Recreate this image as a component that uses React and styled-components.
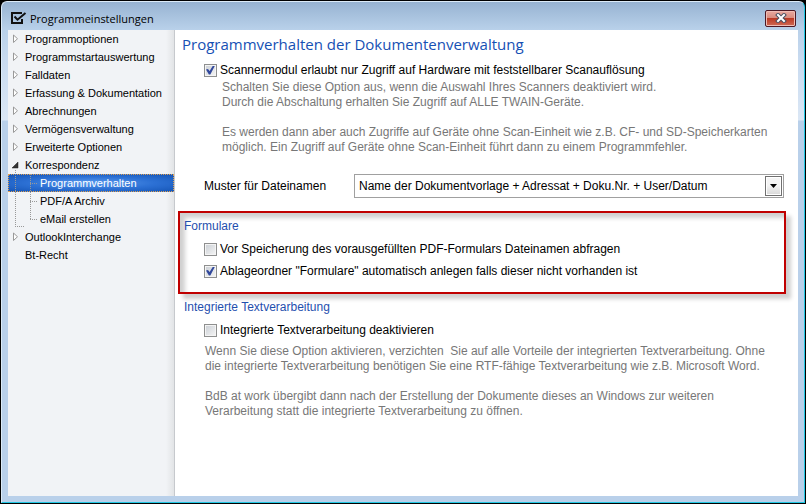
import { useState } from "react";
import styled, { createGlobalStyle, css } from "styled-components";

const GlobalStyle = createGlobalStyle`
  * {
    box-sizing: border-box;
  }
  body {
    margin: 0;
    background-color: #000;
    font-family: "Liberation Sans", Arial, sans-serif;
    font-size: 12px;
    color: #000;
  }
`;

const Window = styled.div`
  display: flex;
  flex-direction: column;
  min-height: calc(100vh - 2px);
  margin: 1px;
  padding: 0 6px 6px;
  border: 1px solid #dcebf8;
  border-right-color: #22c8e4;
  border-bottom-color: #22c8e4;
  border-radius: 6px 6px 0 0;
  background: linear-gradient(#97b3d2 0, #b9d1ea 28px, #c9dbf0 60px, #dbe7f5 118px, #b9d0ea 119px);
`;
const TitleBar = styled.header`
  display: flex;
  align-items: center;
  height: 28px;
  padding: 4px 2px 0;
`;
const Title = styled.h1`
  flex: 1;
  margin: 0 0 0 3px;
  font-family: "Open Sans", "Noto Sans", sans-serif;
  font-size: 11px;
  font-weight: 400;
`;
const CloseButton = styled.button`
  display: flex;
  align-items: center;
  justify-content: center;
  width: 31px;
  height: 17px;
  padding: 0;
  border: 1px solid #4c1824;
  border-radius: 2px;
  background: linear-gradient(#e9a99f, #d98c80 45%, #bb3a25 50%, #cf6a55);
  box-shadow: inset 0 0 0 1px #efbcb4;
`;
const Body = styled.div`
  flex: 1;
  display: flex;
`;

const Sidebar = styled.nav`
  width: 167px;
  flex-shrink: 0;
  border-right: 1px solid #c6c9cd;
  background: linear-gradient(to left, #e2e4e6, #f1f3f6 8px);
  font-size: 11px;
`;
const Tree = styled.ul`
  margin: 0;
  padding: 0;
  list-style: none;
`;
const SubTree = styled(Tree)`
  position: relative;

  &::before {
    content: "";
    position: absolute;
    z-index: 1;
    left: 7px;
    top: -4px;
    bottom: 1px;
    width: 8px;
    border-left: 1px dotted #999;
    border-bottom: 1px dotted #999;
  }
  &::after {
    content: "";
    position: absolute;
    left: 22px;
    top: 0;
    bottom: 9px;
    border-left: 1px dotted #999;
  }
`;
const Branch = styled.span`
  width: 7px;
  margin-right: 3px;
  border-top: 1px dotted #999;
`;
const TreeLink = styled.a`
  display: flex;
  align-items: center;
  height: 18px;
  padding-left: ${({ $nested }) => ($nested ? "22px" : "3px")};
  color: inherit;
  text-decoration: none;
  white-space: nowrap;

  ${({ $active }) =>
    $active &&
    css`
      padding-left: 21px;
      border: 1px dotted #e0a050;
      background: radial-gradient(ellipse at center, #5a9cf0, #2c70d4 55%, #1757b8);
      color: #fff;
    `}
`;
const Marker = styled.svg`
  width: 9px;
  height: 10px;
  margin-right: 5px;
`;

const Content = styled.main`
  flex: 1;
  min-width: 0;
  padding: 4px 12px 16px 3px;
  background-color: #fff;
`;
const Heading = styled.h2`
  margin: 0 0 9px 4px;
  font-family: "Open Sans", "Noto Sans", sans-serif;
  font-size: 15px;
  font-weight: 400;
  line-height: 20px;
  color: #1650b4;
`;
const CheckLabel = styled.label`
  display: flex;
  align-items: center;
  gap: 3px;
  height: 14px;
`;
const CheckBox = styled.input`
  appearance: none;
  display: grid;
  place-items: center;
  width: 13px;
  height: 13px;
  margin: 0;
  border: 1px solid #8e8f8f;
  background: linear-gradient(135deg, #c9ced4, #f6f6f6);
  box-shadow: inset 0 0 0 1px #f4f4f4;

  &:checked::before {
    content: "";
    width: 9px;
    height: 9px;
    background-color: #31489c;
    clip-path: polygon(0 45%, 22% 38%, 40% 62%, 78% 0, 100% 0, 48% 100%, 32% 100%);
  }
`;
const Indented = styled.div`
  padding-left: 26px;
`;
const Hint = styled.p`
  margin: 0;
  padding-left: ${({ $deep }) => ($deep ? "18px" : "1px")};
  line-height: 15px;
  color: #777;
  white-space: pre-line;
`;
const HintGroup = styled.div`
  display: grid;
  gap: 15px;
  margin-top: ${({ $top }) => $top}px;
`;
const PatternRow = styled.div`
  display: flex;
  align-items: center;
  margin-top: 19px;
  padding-right: 2px;
`;
const PatternLabel = styled.label`
  width: 150px;
  flex-shrink: 0;
`;
const SelectBox = styled.div`
  position: relative;
  flex: 1;
`;
const Select = styled.select`
  appearance: none;
  display: block;
  width: 100%;
  height: 24px;
  padding: 0 24px 0 4px;
  border: 1px solid #a0a0a0;
  border-radius: 0;
  background-color: #fff;
  color: #000;
  font: inherit;
`;
const SelectArrow = styled.span`
  position: absolute;
  top: 2px;
  right: 2px;
  display: flex;
  align-items: center;
  justify-content: center;
  width: 17px;
  height: 20px;
  border: 1px solid #707070;
  background: linear-gradient(#f4f4f4 45%, #d8d8d8);
  box-shadow: inset 0 0 0 1px #fff;
  pointer-events: none;
`;
const Group = styled.fieldset`
  display: grid;
  gap: 8px;
  min-width: 0;
  margin: 0;
  padding: 0;
  border: 0;
`;
const HighlightedGroup = styled(Group)`
  margin-top: 13px;
  padding: 6px 4px 14px;
  border: 2px solid #c00000;
  box-shadow: 5px 5px 4px #d0d0d0, inset 5px 5px 4px #d0d0d0;
`;
const PlainGroup = styled(Group)`
  margin-top: 6px;
  padding: 0 6px;
`;
const Legend = styled.legend`
  float: left;
  width: 100%;
  padding: 0;
  line-height: 15px;
  color: #1f4fae;
`;
const Options = styled.div`
  display: grid;
  gap: ${({ $gap }) => $gap || 8}px;
  padding-left: 20px;
`;

const treeItems = [
  { label: "Programmoptionen", expandable: true },
  { label: "Programmstartauswertung", expandable: true },
  { label: "Falldaten", expandable: true },
  { label: "Erfassung & Dokumentation", expandable: true },
  { label: "Abrechnungen", expandable: true },
  { label: "Vermögensverwaltung", expandable: true },
  { label: "Erweiterte Optionen", expandable: true },
  {
    label: "Korrespondenz",
    expandable: true,
    children: ["Programmverhalten", "PDF/A Archiv", "eMail erstellen"],
  },
  { label: "OutlookInterchange", expandable: true },
  { label: "Bt-Recht", expandable: false },
];

const TreeMarker = ({ expandable, open }) => (
  <Marker viewBox="0 0 9 10" aria-hidden="true">
    {expandable && !open && (
      <path d="M2.5 1v7.5l4-3.75z" fill="#fff" stroke="#999" />
    )}
    {open && <path d="M7 2v6H1z" fill="#333" stroke="#222" strokeWidth="0.5" />}
  </Marker>
);

const AppIcon = () => (
  <svg width="17" height="14" viewBox="0 0 17 14" aria-hidden="true">
    <path d="M12 2H2v10h10V8" fill="none" stroke="#111" strokeWidth="2" />
    <path d="M4.5 5.5l3 3.2L15.5 2" fill="none" stroke="#111" strokeWidth="2" />
  </svg>
);

const Check = ({ label, defaultChecked }) => {
  const [checked, setChecked] = useState(Boolean(defaultChecked));
  return (
    <CheckLabel>
      <CheckBox
        type="checkbox"
        checked={checked}
        onChange={(e) => setChecked(e.target.checked)}
      />
      {label}
    </CheckLabel>
  );
};

const App = () => {
  const [active, setActive] = useState("Programmverhalten");

  return (
    <>
      <GlobalStyle />
      <Window>
        <TitleBar>
          <AppIcon />
          <Title>Programmeinstellungen</Title>
          <CloseButton type="button" aria-label="Schließen">
            <svg width="12" height="10" viewBox="0 0 12 10">
              <path d="M3 2l6 6M9 2L3 8" stroke="#4a4f60" strokeWidth="4" strokeLinecap="square" />
              <path d="M3 2l6 6M9 2L3 8" stroke="#fff" strokeWidth="2" strokeLinecap="square" />
            </svg>
          </CloseButton>
        </TitleBar>
        <Body>
          <Sidebar>
            <Tree>
              {treeItems.map(({ label, expandable, children }) => (
                <li key={label}>
                  <TreeLink href="#" onClick={() => setActive(label)}>
                    <TreeMarker expandable={expandable} open={Boolean(children)} />
                    {label}
                  </TreeLink>
                  {children && (
                    <SubTree>
                      {children.map((child) => (
                        <li key={child}>
                          <TreeLink
                            href="#"
                            $nested
                            $active={child === active}
                            onClick={() => setActive(child)}
                          >
                            <Branch />
                            {child}
                          </TreeLink>
                        </li>
                      ))}
                    </SubTree>
                  )}
                </li>
              ))}
            </Tree>
          </Sidebar>
          <Content>
            <Heading>Programmverhalten der Dokumentenverwaltung</Heading>
            <Indented>
              <Check
                label="Scannermodul erlaubt nur Zugriff auf Hardware mit feststellbarer Scanauflösung"
                defaultChecked
              />
              <HintGroup $top={3}>
                <Hint $deep>
                  {"Schalten Sie diese Option aus, wenn die Auswahl Ihres Scanners deaktiviert wird.\nDurch die Abschaltung erhalten Sie Zugriff auf ALLE TWAIN-Geräte."}
                </Hint>
                <Hint $deep>
                  {"Es werden dann aber auch Zugriffe auf Geräte ohne Scan-Einheit wie z.B. CF- und SD-Speicherkarten\nmöglich. Ein Zugriff auf Geräte ohne Scan-Einheit führt dann zu einem Programmfehler."}
                </Hint>
              </HintGroup>
              <PatternRow>
                <PatternLabel htmlFor="pattern">Muster für Dateinamen</PatternLabel>
                <SelectBox>
                  <Select id="pattern">
                    <option>Name der Dokumentvorlage + Adressat + Doku.Nr. + User/Datum</option>
                  </Select>
                  <SelectArrow>
                    <svg width="7" height="4" viewBox="0 0 7 4">
                      <path d="M0 0h7L3.5 4z" />
                    </svg>
                  </SelectArrow>
                </SelectBox>
              </PatternRow>
            </Indented>
            <HighlightedGroup>
              <Legend>Formulare</Legend>
              <Options>
                <Check label="Vor Speicherung des vorausgefüllten PDF-Formulars Dateinamen abfragen" />
                <Check
                  label={'Ablageordner "Formulare" automatisch anlegen falls dieser nicht vorhanden ist'}
                  defaultChecked
                />
              </Options>
            </HighlightedGroup>
            <PlainGroup>
              <Legend>Integrierte Textverarbeitung</Legend>
              <Options $gap={7}>
                <Check label="Integrierte Textverarbeitung deaktivieren" />
                <HintGroup $top={0}>
                  <Hint>
                    {"Wenn Sie diese Option aktivieren, verzichten \u00a0Sie auf alle Vorteile der integrierten Textverarbeitung. Ohne\ndie integrierte Textverarbeitung benötigen Sie eine RTF-fähige Textverarbeitung wie z.B. Microsoft Word."}
                  </Hint>
                  <Hint>
                    {"BdB at work übergibt dann nach der Erstellung der Dokumente dieses an Windows zur weiteren\nVerarbeitung statt die integrierte Textverarbeitung zu öffnen."}
                  </Hint>
                </HintGroup>
              </Options>
            </PlainGroup>
          </Content>
        </Body>
      </Window>
    </>
  );
};

export default App;
